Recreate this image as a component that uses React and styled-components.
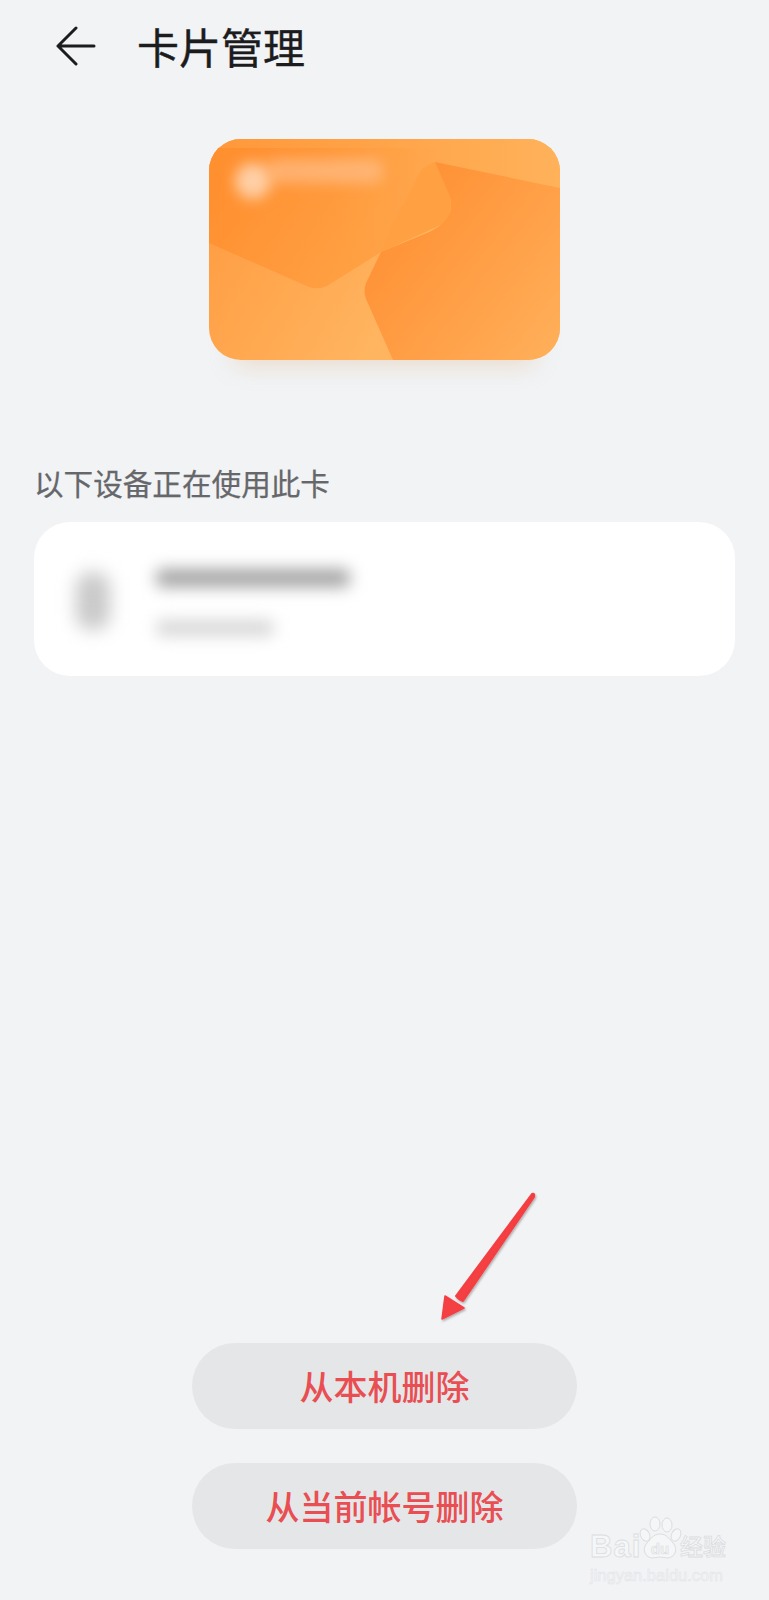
import React from "react";
import styled, { createGlobalStyle } from "styled-components";

const Global = createGlobalStyle`
  html, body { margin: 0; padding: 0; background: #f1f3f5; }
  * { box-sizing: border-box; }
`;
const CJK = `"Noto Sans CJK SC", "Noto Sans", sans-serif`;

const Page = styled.div`
  position: relative;
  width: 769px;
  height: 1600px;
  background: #f1f3f5;
  display: flex;
  flex-direction: column;
  overflow: hidden;
  font-family: ${CJK};
`;
const Header = styled.header`
  height: 94px;
  padding-left: 56px;
  display: flex;
  align-items: center;
  gap: 42px;
`;
const BackIcon = styled.svg`
  width: 40px;
  height: 40px;
  flex: none;
  margin-bottom: 2px;
`;
const Title = styled.h1`
  margin: 0 0 2px -1px;
  font-size: 42px;
  line-height: 56px;
  font-weight: 400;
  color: #1c1c1e;
  -webkit-text-stroke: 0.4px #1c1c1e;
`;
const CardWrap = styled.div`
  display: flex;
  justify-content: center;
  margin-top: 45px;
`;
const Card = styled.div`
  position: relative;
  width: 351px;
  height: 221px;
  border-radius: 32px;
  box-shadow: 0 30px 24px -26px rgba(225, 180, 135, 0.42);
`;
const CardArt = styled.svg`
  display: block;
  width: 351px;
  height: 221px;
  border-radius: 32px;
`;
const SectionLabel = styled.div`
  margin: 103px 0 0 34px;
  font-size: 29.6px;
  line-height: 40px;
  font-weight: 400;
  color: #66676a;
  -webkit-text-stroke: 0.25px #66676a;
`;
const DevicePanel = styled.section`
  margin: 19px 34px 0;
  height: 154px;
  border-radius: 36px;
  background: #fff;
  display: flex;
  align-items: flex-start;
  padding: 47px 0 0 42px;
  gap: 46px;
`;
const DeviceIcon = styled.div`
  width: 34px;
  height: 58px;
  margin-top: 3px;
  border-radius: 15px;
  background: #c9c9c9;
  filter: blur(9px);
`;
const DeviceLines = styled.div`
  display: flex;
  flex-direction: column;
  gap: 33px;
`;
const BlurLine = styled.div`
  width: ${(p) => p.$w}px;
  height: ${(p) => p.$h}px;
  background: ${(p) => p.$c};
  border-radius: 6px;
  filter: blur(8px);
`;
const Actions = styled.footer`
  margin-top: auto;
  padding-bottom: 51px;
  display: flex;
  flex-direction: column;
  align-items: center;
  gap: 34px;
`;
const ActionButton = styled.button`
  width: 385px;
  height: 86px;
  border: 0;
  border-radius: 43px;
  background: #e5e6e8;
  color: #e84e52;
  font-family: ${CJK};
  font-size: 34px;
  font-weight: 500;
  line-height: 1;
  padding: 0;
`;
const Annotation = styled.svg`
  position: absolute;
  left: 430px;
  top: 1180px;
  width: 120px;
  height: 150px;
`;
const Watermark = styled.div`
  position: absolute;
  left: 590px;
  top: 1516px;
  width: 140px;
  height: 68px;
  color: #f5f6f7;
  -webkit-text-stroke: 0.8px #dcdde0;
`;
const WatermarkRow = styled.div`
  display: flex;
  align-items: flex-end;
  height: 46px;
`;
const WatermarkBrand = styled.span`
  font-family: "Liberation Sans", sans-serif;
  font-size: 31px;
  line-height: 31px;
  font-weight: 700;
  letter-spacing: 1px;
  width: 49px;
`;
const Paw = styled.svg`
  width: 44px;
  height: 46px;
  flex: none;
  margin-left: -1px;
  margin-right: -2px;
`;
const WatermarkCn = styled.span`
  font-size: 23px;
  line-height: 28px;
  margin-bottom: 3px;
  font-weight: 500;
`;
const WatermarkUrl = styled.div`
  font-family: "Liberation Sans", sans-serif;
  font-size: 16.5px;
  line-height: 18px;
  margin-top: 4px;
  -webkit-text-stroke: 0.5px #e2e3e6;
  color: #f3f4f6;
  white-space: nowrap;
`;

export default function App() {
  return (
    <Page>
      <Global />
      <Header>
        <BackIcon viewBox="0 0 40 40" fill="none" stroke="#1c1c1e" strokeWidth="3" strokeLinecap="round" strokeLinejoin="round">
          <path d="M38 20H2M20 2 2 20l18 18" />
        </BackIcon>
        <Title>卡片管理</Title>
      </Header>
      <CardWrap>
        <Card>
          <CardArt viewBox="0 0 351 221">
            <defs>
              <linearGradient id="base" gradientUnits="userSpaceOnUse" x1="0" y1="110" x2="170" y2="210">
                <stop offset="0" stopColor="#ff9f45" />
                <stop offset="1" stopColor="#ffb560" />
              </linearGradient>
              <linearGradient id="top" x1="0" y1="0" x2="1" y2="0">
                <stop offset="0" stopColor="#ff983a" />
                <stop offset="0.55" stopColor="#ffa54b" />
                <stop offset="1" stopColor="#ffb25a" />
              </linearGradient>
              <linearGradient id="shapeA" gradientUnits="userSpaceOnUse" x1="10" y1="50" x2="130" y2="130">
                <stop offset="0" stopColor="#ff9030" />
                <stop offset="1" stopColor="#ff9f42" />
              </linearGradient>
              <linearGradient id="shapeA2" gradientUnits="userSpaceOnUse" x1="120" y1="40" x2="230" y2="40">
                <stop offset="0" stopColor="#ff9f42" stopOpacity="0" />
                <stop offset="1" stopColor="#ffa84f" />
              </linearGradient>
              <linearGradient id="shapeB" gradientUnits="userSpaceOnUse" x1="170" y1="80" x2="351" y2="221">
                <stop offset="0" stopColor="#ff9034" />
                <stop offset="1" stopColor="#ffb05b" />
              </linearGradient>
              <filter id="soft" x="-60%" y="-100%" width="220%" height="300%">
                <feGaussianBlur stdDeviation="7" />
              </filter>
            </defs>
            <rect width="351" height="221" fill="url(#base)" />
            <rect width="351" height="60" fill="url(#top)" />
            <path d="M0 9H230V30L172 113 118 147q-9 4 -18 1L0 104Z" fill="url(#shapeA)" />
            <path d="M0 0H230V30L172 113 118 147H0Z" fill="url(#shapeA2)" />
            <path d="M226 23 213 30 184 84 172 113 236 84q8 -10 5 -26Z" fill="#ffa043" />
            <path d="M226 23 351 49V221H184L157 160q-3 -8 0 -16L172 113 213 96q22 -8 28 -22q2 -8 0 -16Z" fill="url(#shapeB)" />
            <rect x="58" y="20" width="116" height="24" rx="8" fill="#ffc596" opacity="0.6" filter="url(#soft)" />
            <circle cx="44" cy="42" r="18" fill="#ffcfa6" filter="url(#soft)" />
          </CardArt>
        </Card>
      </CardWrap>
      <SectionLabel>以下设备正在使用此卡</SectionLabel>
      <DevicePanel>
        <DeviceIcon />
        <DeviceLines>
          <BlurLine $w={194} $h={18} $c="#a2a2a2" />
          <BlurLine $w={118} $h={16} $c="#d6d6d6" />
        </DeviceLines>
      </DevicePanel>
      <Actions>
        <ActionButton>从本机删除</ActionButton>
        <ActionButton>从当前帐号删除</ActionButton>
      </Actions>
      <Annotation viewBox="0 0 120 150">
        <defs>
          <filter id="arrowShadow" x="-20%" y="-20%" width="140%" height="140%">
            <feDropShadow dx="1" dy="1.5" stdDeviation="1.2" floodColor="#000" floodOpacity="0.3" />
          </filter>
        </defs>
        <g filter="url(#arrowShadow)">
          <path d="M102 14 26 116Q29 120 33 121L104 17Q105 13 102 14Z" fill="#f43f42" stroke="#f43f42" strokeWidth="2" strokeLinejoin="round" />
          <path d="M12 139 15 116 34 128Z" fill="#f43f42" stroke="#f43f42" strokeWidth="1.5" strokeLinejoin="round" />
        </g>
      </Annotation>
      <Watermark>
        <WatermarkRow>
          <WatermarkBrand>Bai</WatermarkBrand>
          <Paw viewBox="0 0 44 46" fill="#f5f6f7" stroke="#dcdde0" strokeWidth="1">
            <ellipse cx="7" cy="19" rx="4.5" ry="6.5" transform="rotate(-25 7 19)" />
            <ellipse cx="17" cy="8" rx="5" ry="7" />
            <ellipse cx="29" cy="9" rx="5" ry="7" />
            <ellipse cx="38" cy="19" rx="4.5" ry="6.5" transform="rotate(25 38 19)" />
            <path d="M22 18c7 0 9 5 13 9 5 5 3 14-5 15-3 0-5-1-8-1s-5 1-8 1c-8-1-10-10-5-15 4-4 6-9 13-9Z" />
            <text x="22" y="38" textAnchor="middle" fontFamily="Liberation Sans" fontSize="15" fontWeight="700" strokeWidth="0.7">du</text>
          </Paw>
          <WatermarkCn>经验</WatermarkCn>
        </WatermarkRow>
        <WatermarkUrl>jingyan.baidu.com</WatermarkUrl>
      </Watermark>
    </Page>
  );
}
